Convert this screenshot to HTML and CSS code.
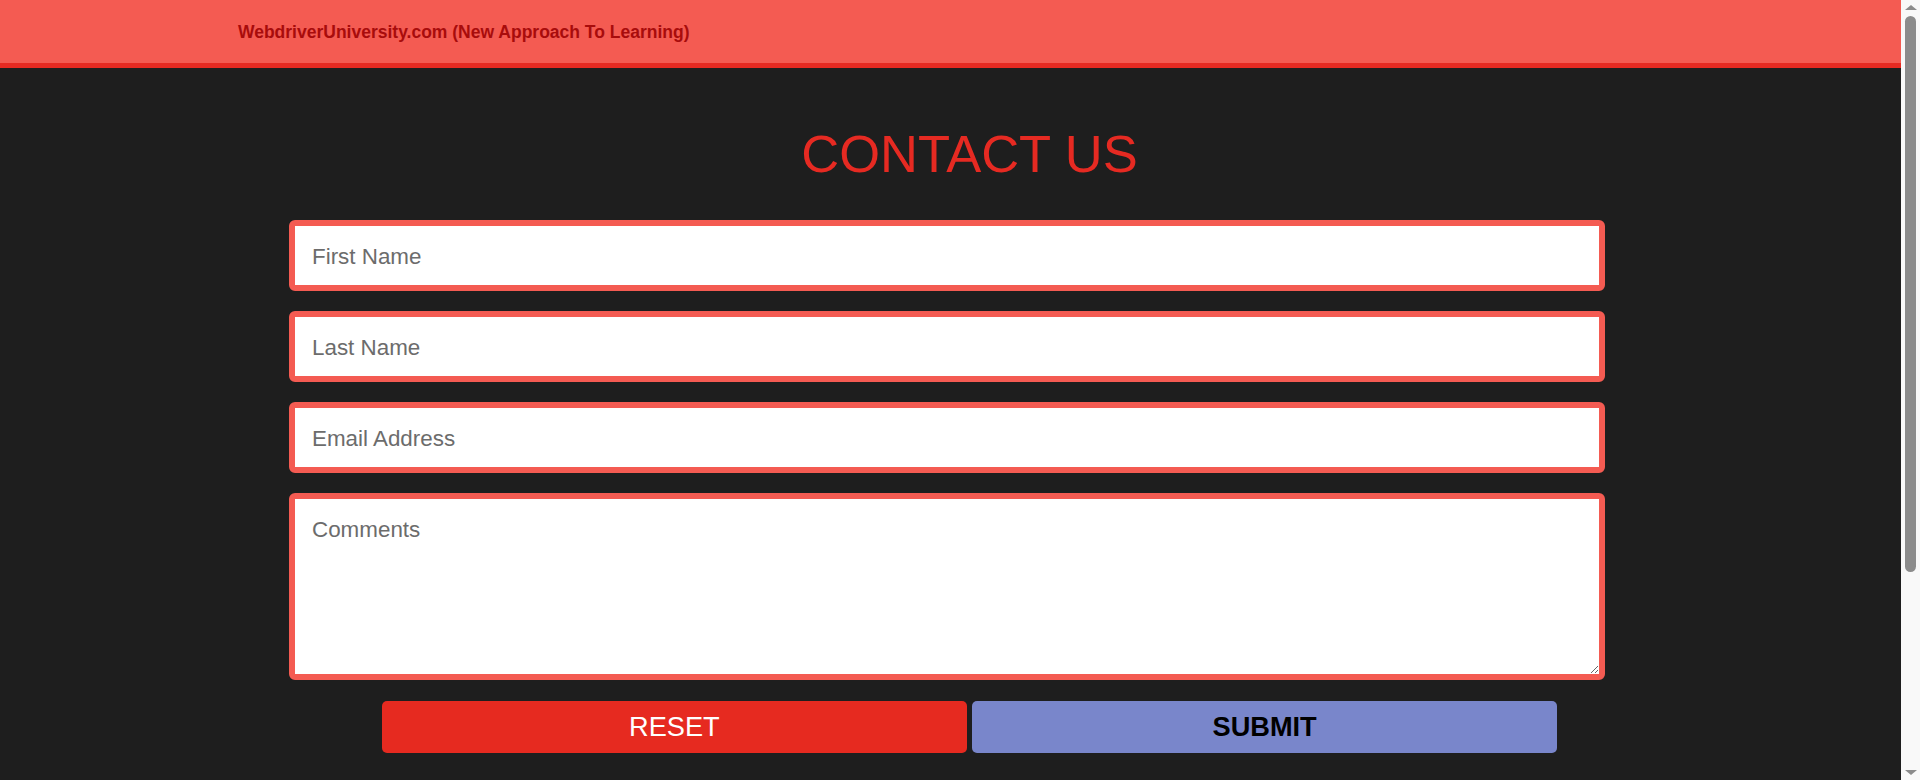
FILE: index.html
```html
<!DOCTYPE html>
<html lang="en">
<head>
<meta charset="utf-8">
<title>WebDriver | Contact Us</title>
<link rel="stylesheet" href="styles.css">
</head>
<body>
<header class="topbar">
  <span class="brand">WebdriverUniversity.com (New Approach To Learning)</span>
</header>
<main class="container">
  <h1 class="title">CONTACT US</h1>
  <form class="contact-form">
    <input class="field" type="text" placeholder="First Name">
    <input class="field" type="text" placeholder="Last Name">
    <input class="field" type="text" placeholder="Email Address">
    <textarea class="field comments" placeholder="Comments"></textarea>
    <div class="actions">
      <button type="reset" class="btn btn-reset">RESET</button>
      <button type="button" class="btn btn-submit">SUBMIT</button>
    </div>
  </form>
</main>
<div class="scrollbar" aria-hidden="true">
  <span class="arrow arrow-up"></span>
  <span class="thumb"></span>
  <span class="arrow arrow-down"></span>
</div>
</body>
</html>
```

FILE: styles.css
```css
html, body {
  margin: 0;
  padding: 0;
}
html {
  background: #1e1e1e;
}
body {
  background: #1e1e1e;
  font-family: "Liberation Sans", Arial, sans-serif;
  min-height: 1090px;
  margin-right: 17px;
}
.topbar {
  height: 63px;
  background: #f45b52;
  border-bottom: 5px solid #e62a22;
  display: flex;
  align-items: center;
  padding-left: 238px;
}
.brand {
  color: #a80c0c;
  font-weight: bold;
  font-size: 17.5px;
  padding-top: 1px;
}
.container {
  width: 1175px;
  margin-left: calc(50% - 569.5px);
}
.title {
  margin: 56px 0 36px;
  font-size: 52.5px;
  line-height: 60px;
  font-weight: normal;
  color: #e62a22;
  text-align: center;
}
.contact-form {
  display: flex;
  flex-direction: column;
}
.field {
  display: block;
  box-sizing: border-box;
  width: 1316px;
  margin: 0 0 19.8px -93px;
  height: 71.3px;
  border: 6px solid #f45b52;
  border-radius: 6px;
  padding: 2px 17px 0;
  background: #fff;
  font-family: "Liberation Sans", Arial, sans-serif;
  font-size: 22.4px;
  color: #333;
  outline: none;
}
.field::placeholder {
  color: #6c6c6c;
}
.comments {
  height: 186.7px;
  padding: 17.5px 17px 10px;
  margin-bottom: 21px;
  resize: vertical;
}
.actions {
  display: flex;
  gap: 5.5px;
}
.btn {
  width: 585px;
  height: 51.7px;
  border: none;
  border-radius: 5px;
  font-family: "Liberation Sans", Arial, sans-serif;
  font-size: 27.2px;
  padding: 0;
  cursor: pointer;
}
.btn-reset {
  background: #e62a20;
  color: #fff;
}
.btn-submit {
  background: #7986cb;
  color: #000;
  font-weight: bold;
}
.scrollbar {
  position: fixed;
  top: 0;
  right: 0;
  width: 19px;
  height: 100vh;
  background: #f9f9f9;
  display: flex;
  flex-direction: column;
  align-items: center;
}
.arrow {
  width: 0;
  height: 0;
  border-left: 6px solid transparent;
  border-right: 6px solid transparent;
}
.arrow-up {
  margin-top: 5px;
  border-bottom: 5px solid #8c8c8c;
}
.arrow-down {
  margin-top: auto;
  margin-bottom: 5px;
  border-top: 5px solid #8c8c8c;
}
.thumb {
  width: 11px;
  height: 556px;
  margin-top: 6px;
  background: #8c8c8c;
  border-radius: 5.5px;
}
```
